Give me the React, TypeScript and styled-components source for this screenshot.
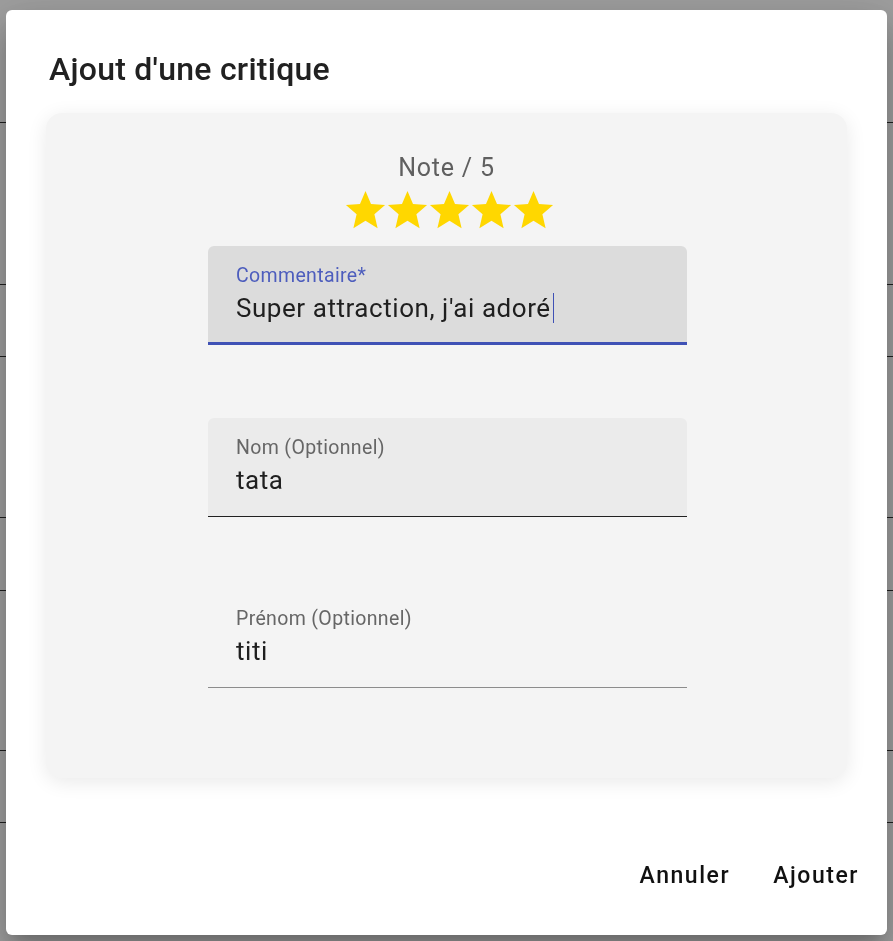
import React from 'react';
import styled, { createGlobalStyle } from 'styled-components';

const Global = createGlobalStyle`
  html, body { margin: 0; padding: 0; }
  body {
    font-family: Roboto, "Noto Sans", sans-serif;
    background: #ffffff;
    width: 893px;
    height: 941px;
    overflow: hidden;
  }
`;

const Page = styled.div`
  display: flex;
  flex-direction: column;
`;

const BgRow = styled.div<{ $h: number }>`
  height: ${(p) => p.$h}px;
  border-bottom: 1px solid #333333;
  box-sizing: border-box;
`;

const Backdrop = styled.div`
  position: fixed;
  inset: 0;
  background: rgba(0, 0, 0, 0.38);
`;

const Dialog = styled.div`
  position: fixed;
  left: 6px;
  top: 10px;
  width: 881px;
  height: 925px;
  background: #ffffff;
  border-radius: 6px;
  box-shadow: 0px 11px 15px -7px rgba(0, 0, 0, 0.2),
    0px 24px 38px 3px rgba(0, 0, 0, 0.14),
    0px 9px 46px 8px rgba(0, 0, 0, 0.12);
  display: flex;
  flex-direction: column;
  box-sizing: border-box;
`;

const Title = styled.h2`
  margin: 0;
  padding: 35px 43px 0;
  font-size: 32px;
  font-weight: 500;
  line-height: 48px;
  color: #212121;
  letter-spacing: 0.25px;
`;

const Card = styled.div`
  margin: 20px 40px 0;
  height: 665px;
  background: #f4f4f4;
  border-radius: 16px;
  box-shadow: 0 4px 20px rgba(0, 0, 0, 0.09);
  display: flex;
  flex-direction: column;
  align-items: center;
  padding-top: 36px;
  box-sizing: border-box;
`;

const NoteLabel = styled.div`
  font-size: 25px;
  line-height: 37.5px;
  color: #5f5f5f;
  letter-spacing: 0.8px;
`;

const Stars = styled.div`
  display: flex;
  margin-left: 5px;
  height: 47px;
  & > svg {
    margin: 0 -2.5px;
  }
`;

const Fields = styled.div`
  margin-top: 12.5px;
  margin-left: 2px;
  width: 479px;
  display: flex;
  flex-direction: column;
  gap: 72.5px;
`;

type FieldKind = 'focused' | 'hover' | 'plain';

const Field = styled.div<{ $kind: FieldKind }>`
  height: 99px;
  box-sizing: border-box;
  padding: 18px 28px 0;
  border-radius: 6px 6px 0 0;
  background: ${(p) =>
    p.$kind === 'focused' ? '#dcdcdc' : p.$kind === 'hover' ? '#ebebeb' : 'transparent'};
  border-bottom: ${(p) =>
    p.$kind === 'focused'
      ? '3px solid #3f51b5'
      : p.$kind === 'hover'
      ? '1px solid #212121'
      : '1px solid #8c8c8c'};
`;

const Label = styled.div<{ $focused?: boolean }>`
  font-size: 19.5px;
  line-height: 23px;
  letter-spacing: 0.35px;
  color: ${(p) => (p.$focused ? '#4d5dbd' : '#666666')};
`;

const Value = styled.div`
  margin-top: 5px;
  font-size: 26px;
  line-height: 32px;
  letter-spacing: 0.55px;
  color: #1f1f1f;
  white-space: nowrap;
`;

const Caret = styled.span`
  display: inline-block;
  width: 1px;
  height: 30px;
  margin-left: 2px;
  vertical-align: -6px;
  background: #3f51b5;
`;

const Actions = styled.div`
  margin-top: auto;
  display: flex;
  justify-content: flex-end;
  gap: 19px;
  padding: 0 16px 40px;
`;

const Button = styled.button`
  border: none;
  background: transparent;
  font-family: Roboto, "Noto Sans", sans-serif;
  font-size: 23px;
  font-weight: 500;
  line-height: 38.5px;
  letter-spacing: 1.55px;
  color: #111111;
  padding: 0 12px;
  cursor: pointer;
`;

const Star = () => (
  <svg width="47" height="47" viewBox="0 0 24 24">
    <path
      fill="#FFD700"
      d="M12 17.27L18.18 21l-1.64-7.03L22 9.24l-7.19-.61L12 2 9.19 8.63 2 9.24l5.46 4.73L5.82 21z"
    />
  </svg>
);

const rows = [123, 162, 72, 161, 73, 160, 72, 119];

export default function App() {
  return (
    <>
      <Global />
      <Page>
        {rows.map((h, i) => (
          <BgRow key={i} $h={h} />
        ))}
      </Page>
      <Backdrop />
      <Dialog>
        <Title>Ajout d'une critique</Title>
        <Card>
          <NoteLabel>Note / 5</NoteLabel>
          <Stars>
            {[0, 1, 2, 3, 4].map((i) => (
              <Star key={i} />
            ))}
          </Stars>
          <Fields>
            <Field $kind="focused">
              <Label $focused>Commentaire*</Label>
              <Value>
                Super attraction, j'ai adoré
                <Caret />
              </Value>
            </Field>
            <Field $kind="hover">
              <Label>Nom (Optionnel)</Label>
              <Value>tata</Value>
            </Field>
            <Field $kind="plain">
              <Label>Prénom (Optionnel)</Label>
              <Value>titi</Value>
            </Field>
          </Fields>
        </Card>
        <Actions>
          <Button>Annuler</Button>
          <Button>Ajouter</Button>
        </Actions>
      </Dialog>
    </>
  );
}
